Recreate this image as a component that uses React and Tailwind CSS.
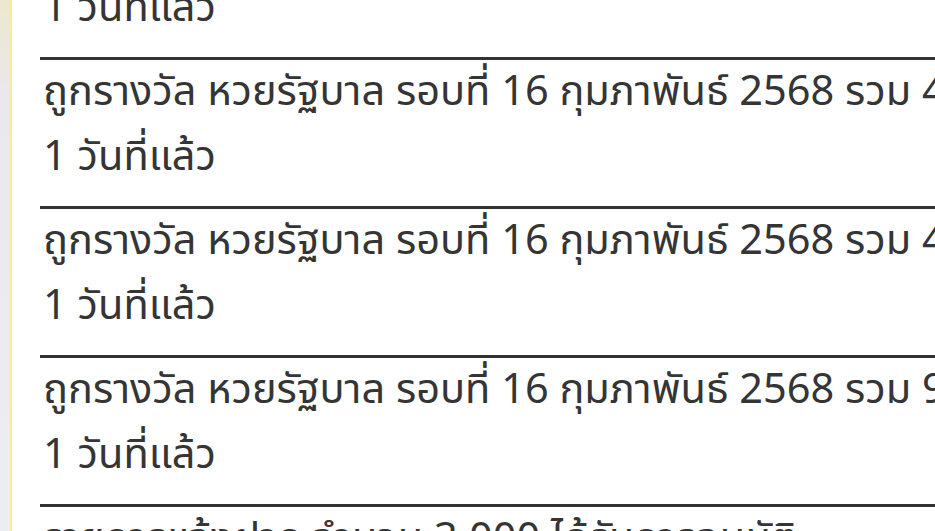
import React from "react";

// รายการแจ้งเตือนล่าสุด
const items = [
  { title: "ถูกรางวัล หวยรัฐบาล รอบที่ 16 กุมภาพันธ์ 2568 รวม 4,500 บาท", ago: "1 วันที่แล้ว" },
  { title: "ถูกรางวัล หวยรัฐบาล รอบที่ 16 กุมภาพันธ์ 2568 รวม 4,000 บาท", ago: "1 วันที่แล้ว" },
  { title: "ถูกรางวัล หวยรัฐบาล รอบที่ 16 กุมภาพันธ์ 2568 รวม 4,000 บาท", ago: "1 วันที่แล้ว" },
  { title: "ถูกรางวัล หวยรัฐบาล รอบที่ 16 กุมภาพันธ์ 2568 รวม 9,000 บาท", ago: "1 วันที่แล้ว" },
  { title: "รายการแจ้งฝาก จำนวน 3,000 ได้รับการอนุมัติ", ago: "1 วันที่แล้ว" },
];

function NotiRow({ item }) {
  return (
    <li className="border-t-[3px] border-[#333333] pb-[16px]">
      <div className="whitespace-nowrap pl-[3px] leading-[65px]">{item.title}</div>
      <div className="whitespace-nowrap pl-[3px] leading-[65px]">{item.ago}</div>
    </li>
  );
}

export default function App() {
  return (
    <div
      className="flex h-[531px] w-full overflow-hidden bg-white text-[41.5px] text-[#353535]"
      style={{ fontFamily: '"Noto Sans Thai", "Noto Sans", sans-serif' }}
    >
      {/* แถบด้านซ้าย */}
      <div className="w-[12px] shrink-0 border-r-[2px] border-[#f7eaa3] bg-gradient-to-b from-[#ece8cc] via-[#eae8ef] via-20% to-[#ecedf2]" />

      <div className="min-w-0 flex-1 overflow-hidden pl-[28px]">
        <ul className="-mt-[92px]">
          {items.map((it, i) => (
            <NotiRow key={i} item={it} />
          ))}
        </ul>
      </div>
    </div>
  );
}
